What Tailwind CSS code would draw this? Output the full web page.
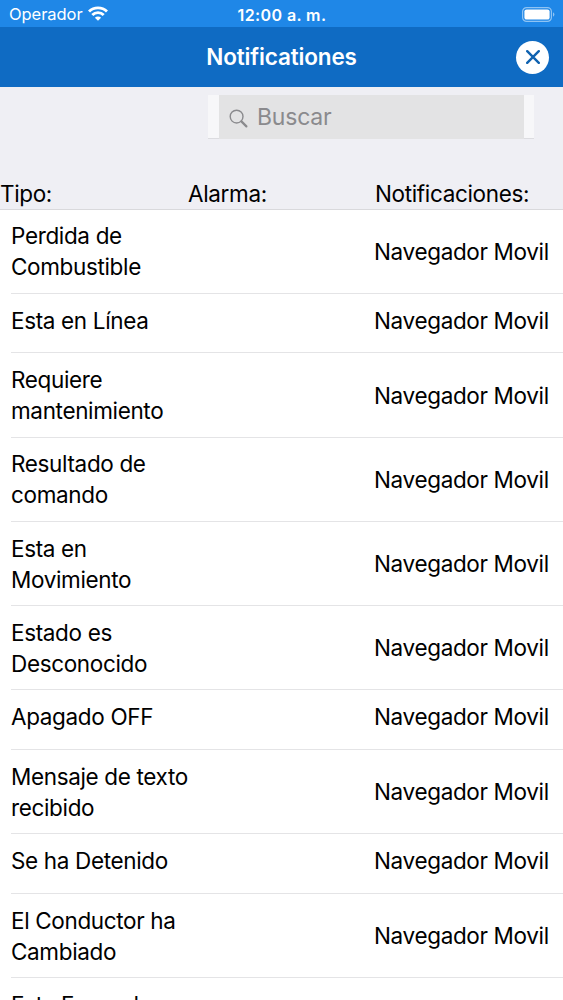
<!DOCTYPE html>
<html lang="es">
<head>
    <meta charset="UTF-8">
    <meta name="viewport" content="width=device-width, initial-scale=1.0">
    <title>Notificationes</title>
    <script src="https://cdn.jsdelivr.net/npm/@tailwindcss/browser@4"></script>
</head>
<body class="h-[1000px] overflow-hidden bg-white font-['Inter',sans-serif] text-black">
    <div class="flex h-full flex-col overflow-hidden">
        <!-- Status bar -->
        <div class="grid h-[27px] shrink-0 grid-cols-3 items-center bg-[#1f87e7] pt-[2px] pr-[8px] pl-[9px] text-white">
            <div class="flex items-center gap-[5px]">
                <span class="text-[16.5px] leading-none tracking-[-0.05px]">Operador</span>
                <svg class="-mt-[2px] h-[15px] w-[20px]" viewBox="0 0 20 15" fill="none" stroke="currentColor" stroke-width="2.9">
                    <path d="M1 5.6a12.7 12.7 0 0 1 18 0" />
                    <path d="M4.3 9a8 8 0 0 1 11.4 0" />
                    <path d="M10 14.8 6.9 11.7a4.4 4.4 0 0 1 6.2 0Z" fill="currentColor" stroke="none" />
                </svg>
            </div>
            <span class="text-center text-[16px] leading-none font-semibold tracking-[0.4px] whitespace-nowrap">12:00 a. m.</span>
            <svg class="-mt-[1px] h-[15px] w-[33px] justify-self-end" viewBox="0 0 33 15">
                <rect x="0.6" y="0.6" width="28.8" height="13.8" rx="4" fill="none" stroke="white" stroke-opacity="0.5" stroke-width="1.2" />
                <rect x="2.4" y="2.4" width="25.2" height="10.2" rx="2.2" fill="white" />
                <path d="M31 5.2a2.6 2.6 0 0 1 0 4.6Z" fill="white" fill-opacity="0.5" />
            </svg>
        </div>

        <!-- Header -->
        <header class="grid h-[60px] shrink-0 grid-cols-[1fr_auto_1fr] items-center bg-[#0f6bc3] pr-[14px] pl-[14px]">
            <h1 class="col-start-2 text-[22.5px] font-semibold tracking-[-0.15px] text-white">Notificationes</h1>
            <button class="flex size-[33px] items-center justify-center justify-self-end rounded-full bg-white text-[#0f62b0]">
                <svg class="size-[14px]" viewBox="0 0 14 14" fill="none" stroke="currentColor" stroke-width="2.4" stroke-linecap="round">
                    <path d="M1.2 1.2 12.8 12.8M12.8 1.2 1.2 12.8" />
                </svg>
            </button>
        </header>

        <!-- Search and column titles -->
        <div class="flex h-[123px] shrink-0 flex-col border-b border-[#d9d9dc] bg-[#efeff4] pt-[8px]">
            <div class="ml-[208px] h-[44px] w-[326px] border-b border-[#dcdce0] bg-[#f7f7f9] pr-[10px] pl-[11px]">
                <div class="flex h-[44px] items-center bg-[#e3e3e4] pl-[10px] text-[#8a8a8d]">
                    <svg class="mt-[2px] size-[19px]" viewBox="0 0 19 19" fill="none" stroke="currentColor">
                        <circle cx="7.6" cy="7.6" r="6.4" stroke-width="1.4" />
                        <path d="m12.4 12.4 5 5" stroke-width="2.2" stroke-linecap="round" />
                    </svg>
                    <span class="ml-[9px] text-[23px] tracking-[-0.2px]">Buscar</span>
                </div>
            </div>
            <div class="mt-[39px] grid grid-cols-[188px_187px_188px] text-[22.5px] leading-[31px] tracking-[-0.35px]">
                <span>Tipo:</span>
                <span>Alarma:</span>
                <span>Notificaciones:</span>
            </div>
        </div>

        <!-- List -->
        <ul class="flex flex-col pl-[11px] text-[22.5px] leading-[31px] tracking-[-0.35px]">
            <li class="flex h-[84px] shrink-0 items-center border-b border-[#e4e4e6]">
                <span class="w-[363px] pb-px">Perdida de<br>Combustible</span>
                <span class="whitespace-nowrap">Navegador Movil</span>
            </li>
            <li class="flex h-[59px] shrink-0 items-center border-b border-[#e4e4e6] pb-[6px]">
                <span class="w-[363px]">Esta en Línea</span>
                <span class="whitespace-nowrap">Navegador Movil</span>
            </li>
            <li class="flex h-[85px] shrink-0 items-center border-b border-[#e4e4e6]">
                <span class="w-[363px]">Requiere<br>mantenimiento</span>
                <span class="whitespace-nowrap">Navegador Movil</span>
            </li>
            <li class="flex h-[84px] shrink-0 items-center border-b border-[#e4e4e6]">
                <span class="w-[363px] pb-px">Resultado de<br>comando</span>
                <span class="whitespace-nowrap">Navegador Movil</span>
            </li>
            <li class="flex h-[84px] shrink-0 items-center border-b border-[#e4e4e6]">
                <span class="w-[363px]">Esta en<br>Movimiento</span>
                <span class="whitespace-nowrap">Navegador Movil</span>
            </li>
            <li class="flex h-[84px] shrink-0 items-center border-b border-[#e4e4e6]">
                <span class="w-[363px]">Estado es<br>Desconocido</span>
                <span class="whitespace-nowrap">Navegador Movil</span>
            </li>
            <li class="flex h-[60px] shrink-0 items-center border-b border-[#e4e4e6] pb-[6px]">
                <span class="w-[363px]">Apagado OFF</span>
                <span class="whitespace-nowrap">Navegador Movil</span>
            </li>
            <li class="flex h-[84px] shrink-0 items-center border-b border-[#e4e4e6]">
                <span class="w-[363px]">Mensaje de texto<br>recibido</span>
                <span class="whitespace-nowrap">Navegador Movil</span>
            </li>
            <li class="flex h-[60px] shrink-0 items-center border-b border-[#e4e4e6] pb-[6px]">
                <span class="w-[363px]">Se ha Detenido</span>
                <span class="whitespace-nowrap">Navegador Movil</span>
            </li>
            <li class="flex h-[84px] shrink-0 items-center border-b border-[#e4e4e6]">
                <span class="w-[363px]">El Conductor ha<br>Cambiado</span>
                <span class="whitespace-nowrap">Navegador Movil</span>
            </li>
            <li class="flex h-[84px] shrink-0 items-center border-b border-[#e4e4e6]">
                <span class="w-[363px]">Esta Fuera de<br>Línea</span>
                <span class="whitespace-nowrap">Navegador Movil</span>
            </li>
        </ul>
    </div>
</body>
</html>
